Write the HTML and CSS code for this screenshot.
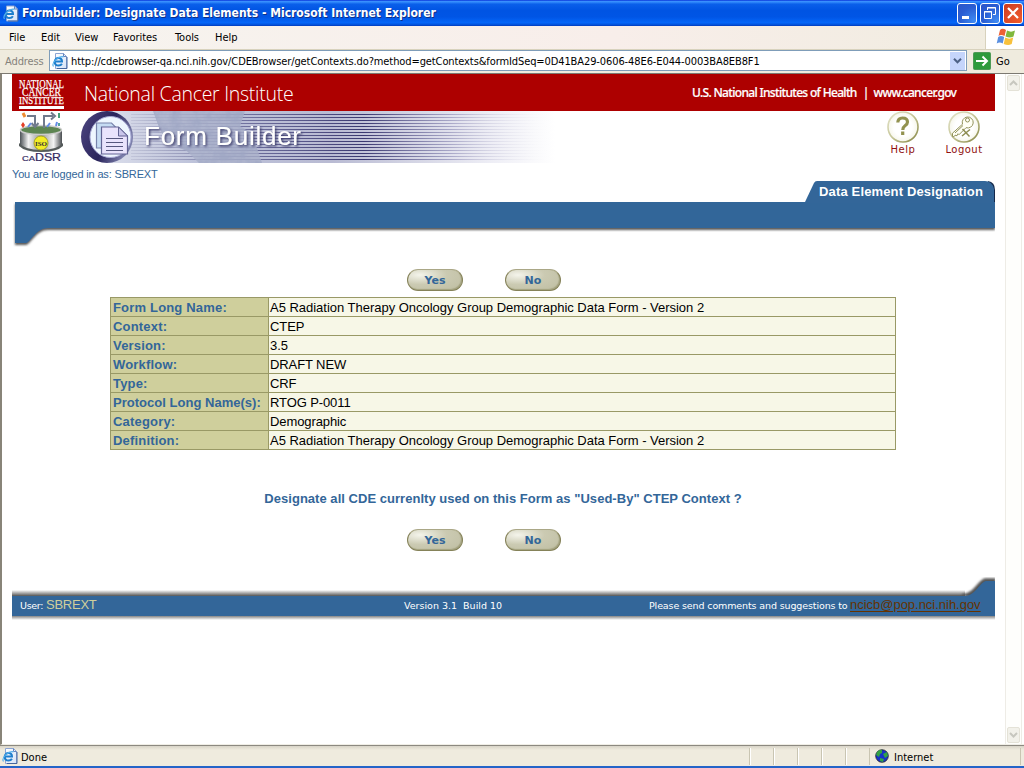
FILE: index.html
```html
<!DOCTYPE html>
<html lang="en">
<head>
<meta charset="utf-8">
<title>Formbuilder: Designate Data Elements</title>
<link rel="stylesheet" href="styles.css">
</head>
<body>
<svg class="defs" width="0" height="0" aria-hidden="true">
  <defs>
    <linearGradient id="paper" x1="0" y1="0" x2="1" y2="1"><stop offset="0" stop-color="#fff"/><stop offset="1" stop-color="#d5e2f7"/></linearGradient>
    <symbol id="ie" viewBox="0 0 16 16">
      <path d="M3.500.5h8l3 3v12h-11z" fill="url(#paper)" stroke="#8ca5d3"/>
      <path d="M11.500.5v3h3" fill="none" stroke="#6584bd"/><path d="M15 4v11.500H5" fill="none" stroke="#44659e"/>
      <path d="M3 8.500H10C10 6.200 8.500 5 6.500 5C4.300 5 2.700 6.700 2.700 8.800C2.700 11 4.300 12.600 6.500 12.600C8.200 12.600 9.300 11.900 9.900 10.800" fill="none" stroke="#1f7fcd" stroke-width="2"/>
      <path d="M1.500 13.500C-1 10 6.500 2.500 11.500 3.800" fill="none" stroke="#55b0ec" stroke-width="1.200"/>
    </symbol>
    <radialGradient id="rim"><stop offset=".6" stop-color="#fff"/><stop offset="1" stop-color="#f6f6ea"/></radialGradient>
    <linearGradient id="ring" x1="0" y1="0" x2="1" y2="1"><stop offset="0" stop-color="#e5e5cc"/><stop offset=".5" stop-color="#c3c394"/><stop offset="1" stop-color="#858544"/></linearGradient>
  </defs>
</svg>
<div class="window">
  <header class="titlebar">
    <svg class="ie-icon" width="16" height="17"><use href="#ie"/></svg>
    <span class="title">Formbuilder: Designate Data Elements - Microsoft Internet Explorer</span>
    <div class="controls">
      <span class="ctl"><svg width="18" height="18"><path d="M4 12h7v3H4z" fill="#fff"/></svg></span>
      <span class="ctl"><svg width="18" height="18" fill="none" stroke="#fff"><path d="M6.500 6V3.500h8v7H12M6 4h9M3.500 7.500h7v7h-7zM3 8h8"/></svg></span>
      <span class="ctl close"><svg width="18" height="18"><path d="M4 4l10 10M14 4L4 14" stroke="#fff" stroke-width="2.200"/></svg></span>
    </div>
  </header>
  <nav class="menubar">
    <span class="m-file">File</span><span class="m-edit">Edit</span><span class="m-view">View</span><span class="m-fav">Favorites</span><span class="m-tools">Tools</span><span>Help</span>
    <div class="flag"><svg width="20" height="18">
      <path d="M4 2c2-2 4-1 6 0L8.500 8c-2-1-4-1.500-6 0z" fill="#ed6135"/>
      <path d="M11 2.500c3 1.500 5 1.500 8 0L17.500 8.500c-3 1.500-5 1-8 0z" fill="#80b83c"/>
      <path d="M2.200 9c2-1.500 4-1 6 0l-1.500 6.500c-2-1.500-4-1.500-6 0z" fill="#5a8fe0"/>
      <path d="M9.200 9.500c3 1.500 5 1.500 8 0l-1.500 6.500c-3 1.500-5 1-8 0z" fill="#f8c13c"/>
    </svg></div>
  </nav>
  <div class="address">
    <span class="addr-label">Address</span>
    <div class="field">
      <svg width="16" height="16"><use href="#ie"/></svg>
      <span class="url">http://cdebrowser-qa.nci.nih.gov/CDEBrowser/getContexts.do?method=getContexts&amp;formIdSeq=0D41BA29-0606-48E6-E044-0003BA8EB8F1</span>
      <span class="drop"><svg width="9" height="6"><path d="M1 .8l3.500 3.500L8 .8" fill="none" stroke="#4d6185" stroke-width="2"/></svg></span>
    </div>
    <span class="go"><svg width="18" height="18"><rect x=".5" y=".5" width="17" height="17" rx="1" fill="#2e9a3c" stroke="#4d9a56"/><path d="M3 9h11M9.500 4.500L14 9l-4.500 4.500" fill="none" stroke="#fff" stroke-width="2"/></svg><span>Go</span></span>
  </div>
  <div class="viewport">
    <main class="page">
      <div class="nci">
        <svg class="nci-logo" width="46" height="31" fill="#fff" stroke="#fff" stroke-width=".25" font-family="Liberation Serif, serif">
          <text x="0" y="8.500" font-size="12" textLength="45" lengthAdjust="spacingAndGlyphs">NATIONAL</text>
          <text x="3" y="17" font-size="11.500" textLength="39" lengthAdjust="spacingAndGlyphs">CANCER</text>
          <text x="0" y="25" font-size="11" textLength="45" lengthAdjust="spacingAndGlyphs">INSTITUTE</text>
          <path d="M0 27h45v3H0z" stroke="none"/>
        </svg>
        <span class="nci-name">National Cancer Institute</span>
        <span class="nih">U.S. National Institutes of Health</span><span class="bar">|</span><span class="site">www.cancer.gov</span>
      </div>
      <div class="brand">
        <svg class="cadsr" width="52" height="52">
          <defs><linearGradient id="drum"><stop offset="0" stop-color="#4c5257"/><stop offset=".2" stop-color="#f2f2f2"/><stop offset=".5" stop-color="#91938e"/><stop offset=".8" stop-color="#f4f4f4"/><stop offset="1" stop-color="#494d50"/></linearGradient></defs>
          <path d="M5 20v14c5 7 37 7 42 0V20z" fill="url(#drum)"/>
          <path d="M4 32q6 7 22 7t22-7v3q-6 6-22 6T4 35z" fill="#555b5b"/>
          <ellipse cx="26" cy="19" rx="20.500" ry="4.500" fill="#5d8552" stroke="#ccc" stroke-width="1.500"/>
          <path d="M12 5h8v10M16.500 12l3.500 4 3.500-4M29 17V5h9M36 1.500l4 3.500-4 3.500" fill="none" stroke="#707a8c" stroke-width="2"/>
          <path d="M13 16l3-4M32 16l3-4M41 15l1-4" stroke="#648be8" stroke-width="2"/>
          <path d="M6 14l2-3 2 3-2 3z" fill="#e33f27"/><path d="M44 2v5" stroke="#46a07a" stroke-width="2"/><path d="M8 2l2 4" stroke="#ed8b31" stroke-width="3"/><path d="M44 12v3" stroke="#55a3a0" stroke-width="2"/>
          <circle cx="26" cy="32" r="7" fill="#f3ed24" stroke="#a5a425"/>
          <text x="20" y="34.500" font-family="Liberation Serif, serif" font-size="7" font-weight="bold" textLength="12" lengthAdjust="spacingAndGlyphs" fill="#333">ISO</text>
          <text x="7" y="50" font-family="Liberation Sans, sans-serif" font-size="8" fill="#33295f" stroke="#33295f" stroke-width=".2" textLength="13" lengthAdjust="spacingAndGlyphs">CA</text>
          <text x="20" y="50" font-family="Liberation Sans, sans-serif" font-size="10.500" fill="#33295f" stroke="#33295f" stroke-width=".2" textLength="26" lengthAdjust="spacingAndGlyphs">DSR</text>
        </svg>
        <div class="banner">
          <svg width="474" height="52">
            <defs>
              <linearGradient id="fade"><stop offset="0" stop-color="#d9dcea"/><stop offset=".2" stop-color="#bcc1d9"/><stop offset=".5" stop-color="#b9bbd3"/><stop offset=".65" stop-color="#cfd0e1"/><stop offset=".85" stop-color="#ededf5"/><stop offset="1" stop-color="#fff"/></linearGradient>
              <linearGradient id="rules"><stop offset="0" stop-color="#6a6c95" stop-opacity=".15"/><stop offset=".25" stop-color="#55558a" stop-opacity=".7"/><stop offset=".55" stop-color="#3a3870"/><stop offset=".75" stop-color="#8d8bb5" stop-opacity=".7"/><stop offset="1" stop-color="#fff" stop-opacity="0"/></linearGradient>
              <linearGradient id="orb" x1="0" y1="0" x2="1" y2=".4"><stop offset="0" stop-color="#b9b5da"/><stop offset=".15" stop-color="#453e78"/><stop offset=".6" stop-color="#29245b"/><stop offset="1" stop-color="#7d80ac"/></linearGradient>
              <filter id="shade" x="-10%" y="-30%" width="125%" height="170%"><feDropShadow dx="1.500" dy="1.500" stdDeviation=".8" flood-color="#3b3b6b"/></filter>
              <filter id="cloud" x="0" y="0" width="100%" height="100%"><feTurbulence type="fractalNoise" baseFrequency=".1" numOctaves="3" seed="4"/><feColorMatrix values="0 0 0 0 .34 0 0 0 0 .38 0 0 0 0 .55 2.400 0 0 0 -.8"/><feComposite in2="SourceAlpha" operator="in"/></filter>
            </defs>
            <path d="M28 0h446v52H28z" fill="url(#fade)"/>
            <path d="M50 3.500H473M50 6.500H473.010M50 9.500H473M50 12.500H473M50 15.500H473M50 18.500H473M50 21.500H473M50 24.500H473M50 27.500H473M50 30.500H473M50 33.500H473M50 36.500H473M50 39.500H473M50 42.500H473M50 45.500H473M50 48.500H473" stroke="url(#rules)"/>
            <path d="M72 0h70l4 12 8 10-6 14 10 16H118l-12-12-20-8-8-16zM140 0h24l-5 15 12 8 10 29h-40l8-28z" fill="#a9b0c9" opacity=".75"/>
            <path d="M72 0h70l4 12 8 10-6 14 10 16H118l-12-12-20-8-8-16zM140 0h24l-5 15 12 8 10 29h-40l8-28z" filter="url(#cloud)" opacity=".7"/>
            <circle cx="26" cy="26" r="26" fill="url(#orb)"/>
            <circle cx="29.500" cy="26" r="20.500" fill="#eef6ff" stroke="#a8aad5"/>
            <path d="M15.500 12h15l5 5v20h-20z" fill="#c6dcf3" stroke="#7883ac" stroke-width="1.200"/>
            <path d="M20.500 16h17l9 9v18h-26z" fill="#e9e3fc" stroke="#626393" stroke-width="1.200"/>
            <path d="M37.500 16v9h9z" fill="#c9c6ea" stroke="#626393"/>
            <path d="M25 27.500h17M25 31.500h17M25 35.500h17M25 39.500h17" stroke="#56577e" stroke-width="1.200"/>
            <text class="fb" x="63" y="34" textLength="157" lengthAdjust="spacing" filter="url(#shade)">Form Builder</text>
          </svg>
        </div>
        <div class="tool help"><svg width="32" height="32"><circle cx="16" cy="16" r="15" fill="url(#rim)" stroke="url(#ring)" stroke-width="1.600"/><path d="M10.800 11.500q.2-4.500 4.700-4.500 5 0 5 4 0 2-2.500 3.700-2.200 1.500-2.200 4.300M15.700 20.500v3.500" fill="none" stroke="#92924f" stroke-width="3.200"/></svg><span>Help</span></div>
        <div class="tool"><svg width="32" height="32"><circle cx="16" cy="16" r="15" fill="url(#rim)" stroke="url(#ring)" stroke-width="1.600"/><path d="M14.500 13.200a5.500 5.500 0 1 1 3.500 3.500l-7 7-1-1-1 2-2-.5-1 1.500H4.500v-3.500zM7 22l8-7.500" fill="#fffff5" stroke="#92925a"/><circle cx="19.500" cy="9" r="2" fill="none" stroke="#92925a"/><path d="M14.500 18l7 7.500M22 18.500l-8 6.500" stroke="#8d8d51" stroke-width="1.500"/></svg><span>Logout</span></div>
      </div>
      <div class="login">You are logged in as: SBREXT</div>
      <div class="tabbar">
        <svg width="983" height="68">
          <defs><filter id="soft" x="-5%" y="-20%" width="110%" height="150%"><feDropShadow dx="0" dy="2" stdDeviation="1.200" flood-color="#444" flood-opacity=".9"/></filter></defs>
          <path d="M976 0q7 1 7 9v12h-5z" fill="#14284a"/>
          <path d="M3 21h980v26H36C24 47 19 61 14 62H3z" fill="#336699" filter="url(#soft)"/>
          <path d="M793 21l9-19q1-2 3-2h168q7 0 9 8v14H793z" fill="#336699"/>
        </svg>
        <span class="tab">Data Element Designation</span>
      </div>
      <div class="buttons top"><button>Yes</button><button>No</button></div>
      <table class="details">
        <tr><th>Form Long Name:</th><td class="long">A5 Radiation Therapy Oncology Group Demographic Data Form - Version 2</td></tr>
        <tr><th>Context:</th><td class="caps">CTEP</td></tr>
        <tr><th>Version:</th><td class="caps">3.5</td></tr>
        <tr><th>Workflow:</th><td class="caps">DRAFT NEW</td></tr>
        <tr><th>Type:</th><td class="caps">CRF</td></tr>
        <tr><th class="proto">Protocol Long Name(s):</th><td class="caps">RTOG P-0011</td></tr>
        <tr><th>Category:</th><td>Demographic</td></tr>
        <tr><th>Definition:</th><td class="long">A5 Radiation Therapy Oncology Group Demographic Data Form - Version 2</td></tr>
      </table>
      <p class="question">Designate all CDE currenlty used on this Form as "Used-By" CTEP Context ?</p>
      <div class="buttons bottom"><button>Yes</button><button>No</button></div>
      <footer class="footer">
        <svg width="983" height="44">
          <defs><linearGradient id="above" x1="0" y1="0" x2="0" y2="1"><stop offset="0" stop-color="#fff"/><stop offset="1" stop-color="#555"/></linearGradient>
          <linearGradient id="below" x1="0" y1="0" x2="0" y2="1"><stop offset="0" stop-color="#666"/><stop offset="1" stop-color="#fff"/></linearGradient><filter id="blur"><feGaussianBlur stdDeviation="1.100"/></filter></defs>
          <path d="M0 14h953v6H0z" fill="url(#above)"/>
          <path d="M0 39h983v5H0z" fill="url(#below)"/>
          <path d="M950 19C964 17 966 5 973 3h10v10h-8l-12 9z" fill="#555" stroke="#555" stroke-width="1.500" filter="url(#blur)"/>
          <path d="M0 20h953c10 0 15-14 21-15h9v35H0z" fill="#336699"/>
        </svg>
        <div class="foot-text">
          <span class="user">User:</span><span class="name">SBREXT</span>
          <span class="ver">Version 3.1&nbsp; Build 10</span>
          <span class="send">Please send comments and suggestions to</span><a class="mail">ncicb@pop.nci.nih.gov</a>
        </div>
      </footer>
    </main>
    <aside class="scroll">
      <span class="sb"><svg width="9" height="6"><path d="M1 5l3.500-3.500L8 5" fill="none" stroke="#c7c7bf" stroke-width="2"/></svg></span>
      <span class="sb"><svg width="9" height="6"><path d="M1 1l3.500 3.500L8 1" fill="none" stroke="#c7c7bf" stroke-width="2"/></svg></span>
    </aside>
  </div>
  <div class="status">
    <svg width="16" height="16"><use href="#ie"/></svg><span class="done">Done</span>
    <i></i><i></i><i></i><i></i><i></i>
    <div class="zone"><svg width="14" height="14"><circle cx="7" cy="7" r="6.300" fill="#1833c9" stroke="#222" stroke-width=".8"/><path d="M2 3q3-3 5-2v3L5 5 4 8 1 6zM8 5l4-2 1 4-3 2zM5 9l4 1-1 3-3-1z" fill="#34a344"/></svg><span>Internet</span></div>
  </div>
</div>
</body>
</html>
```
FILE: styles.css
```css
* { box-sizing: border-box; }
body { margin: 0; font-family: "Liberation Sans", Arial, sans-serif; }
svg { display: block; flex: none; }
.defs { position: absolute; }
.window { width: 1024px; height: 768px; display: flex; flex-direction: column; overflow: hidden; white-space: nowrap; background: #efebde; }
.titlebar, .menubar, .address, .status { font-family: "DejaVu Sans Condensed", "DejaVu Sans", sans-serif; font-stretch: condensed; font-size: 11px; color: #000; display: flex; align-items: center; }
.titlebar { height: 26px; padding: 0 3px; background: linear-gradient(#0831d9 0, #3a93ff 6%, #0a5fea 16%, #0054e3 40%, #0055e5 65%, #0566f8 87%, #0355df 94%, #023bbd); }
.title { color: #fff; font-size: 12px; font-weight: bold; margin-left: 3px; letter-spacing: 0; text-shadow: 1px 1px #0f2f86; }
.controls { display: flex; gap: 3px; margin-left: auto; margin-right: -2px; }
.ctl { width: 20px; height: 21px; border: 1px solid #fff; border-radius: 3px; background: radial-gradient(circle at 90% 90%, #3f8bf3, #2a5dd2 60%, #2c55c8); }
.close { background: radial-gradient(circle at 90% 90%, #f05a2a, #dc4a29 60%, #c9391c); }
.menubar { height: 24px; padding-left: 9px; background: linear-gradient(90deg, #f6f4ef, #f8eeea 60%, #f0ecdf); border-bottom: 1px solid #d8d2bd; }
.menubar span { letter-spacing: -.05px; }
.m-file { width: 32px; } .m-edit { width: 34px; } .m-view { width: 38px; } .m-fav { width: 62px; } .m-tools { width: 40px; }
.flag { width: 39px; height: 23px; margin-left: auto; padding: 2px 0 0 10px; background: #fff; border-left: 1px solid #d8d2bd; }
.address { height: 24px; padding: 0 2px 2px 5px; border-bottom: 1px solid #7c7971; }
.addr-label { width: 44px; padding-top: 1px; color: #85827b; letter-spacing: -.1px; }
.field { display: flex; align-items: center; width: 918px; height: 21px; padding: 0 1px 0 2px; background: #fff; border: 1px solid #7f9db9; }
.url { margin-left: 3px; padding-top: 2px; letter-spacing: -.1px; }
.drop { display: grid; place-items: center; width: 15px; height: 18px; margin-left: auto; background: #c5d5fb; }
.go { display: flex; align-items: center; gap: 5px; margin-left: 6px; }
.go span { padding-top: 1px; }
.viewport { flex: 1; display: flex; background: #fff; border-left: 2px solid #888478; border-bottom: 1px solid #f0eee6; min-height: 0; }
.page { width: 1003px; padding-left: 10px; }
.scroll { width: 17px; display: flex; flex-direction: column; justify-content: space-between; background: #fefefc; border-left: 1px solid #eeece6; border-right: 1px solid #eeece6; }
.sb { display: grid; place-items: center; height: 16px; margin: 1px; background: #f2f1ea; border: 1px solid #e4e2d7; border-radius: 2px; }
.nci { display: flex; align-items: center; width: 983px; height: 37px; background: #ad0000; color: #fff; font-family: "Noto Sans", sans-serif; }
.nci-logo { margin: 3px 0 0 7px; overflow: visible; }
.nci-name { width: 608px; margin-left: 19px; padding-top: 2px; font-family: "Open Sans", sans-serif; font-size: 19.500px; font-weight: 300; letter-spacing: -.28px; }
.nih, .site, .bar { font-size: 12px; font-weight: 500; letter-spacing: -.68px; -webkit-text-stroke: .2px #fff; }
.bar { margin: 0 5px 0 6px; }
.brand { display: flex; height: 52px; width: 983px; }
.cadsr { margin-left: 3px; }
.banner { width: 474px; margin-left: 14px; }
.fb { font-family: "Liberation Sans", sans-serif; font-size: 26px; fill: #fff; }
.tool { display: flex; flex-direction: column; align-items: center; width: 40px; color: #901010; font: 10px/13px "DejaVu Sans", sans-serif; letter-spacing: .5px; }
.help { margin-left: 328px; margin-right: 21px; }
.login { height: 18px; font-size: 11px; line-height: 22px; color: #336699; letter-spacing: -.16px; }
.tabbar { display: grid; height: 88px; width: 983px; }
.tabbar > *, .footer > * { grid-area: 1 / 1; }
.tab { justify-self: end; margin-right: 12px; height: 21px; line-height: 21px; color: #fff; font-size: 13px; font-weight: bold; letter-spacing: .15px; }
.buttons { display: flex; gap: 42px; padding-left: 395px; height: 22px; }
button { width: 56px; height: 22px; padding: 0; border: 1px solid #858259; border-top-color: #aaa786; border-radius: 11px; background: radial-gradient(ellipse at 22% 25%, #f4f4eb, #cbcab2 45%, #bebda1); box-shadow: inset -1px -1px 1px #a3a27f; color: #336699; font: bold 11px "DejaVu Sans", sans-serif; }
.details { margin: 6px 0 0 98px; width: 786px; table-layout: fixed; border-collapse: collapse; font-size: 13px; line-height: 16px; color: #000; }
.details tr { height: 19px; }
.details th, .details td { border: 1px solid #999966; padding: 2px 1px 0; height: 19px; text-align: left; }
.details th { width: 158px; padding-left: 2px; background: #cfcf9c; color: #336699; letter-spacing: .18px; }
.details .proto { letter-spacing: .02px; }
.details td { background: #f7f7e7; letter-spacing: -.1px; }
.details .long { letter-spacing: -.02px; }
.question { width: 982px; margin: 39px 0 0; height: 40px; text-align: center; font-size: 13px; line-height: 20px; font-weight: bold; color: #336699; letter-spacing: .03px; }
.footer { display: grid; width: 983px; margin-top: 25px; }
.foot-text { display: flex; align-items: baseline; height: 18px; margin-top: 20px; padding-left: 8px; color: #fff; font: 10px/20px "DejaVu Sans", sans-serif; }
.user { width: 26px; font-size: 9.500px; letter-spacing: -.3px; }
.name { width: 358px; color: #cfcf9c; font: 13px "Liberation Sans", sans-serif; letter-spacing: -.25px; }
.ver { width: 245px; font-size: 9.500px; }
.send { width: 201px; font-size: 9.500px; letter-spacing: -.12px; }
.mail { font: 13px "Liberation Sans", sans-serif; color: #663300; text-decoration: underline; text-underline-offset: 2px; letter-spacing: -.02px; }
.status { height: 23px; padding: 1px 2px 1px; border-top: 1px solid #8c8980; border-bottom: 2px solid #2464c8; background: linear-gradient(#d8d4c8, #efebde 20%); }
.done { width: 728px; margin-left: 3px; padding-top: 2px; }
.status i { width: 24px; height: 17px; border-left: 1px solid #c9c5b2; box-shadow: inset 1px 0 #fff; }
.zone { display: flex; align-items: center; gap: 5px; width: 152px; height: 17px; padding-left: 5px; border-left: 1px solid #c9c5b2; border-right: 1px solid #c9c5b2; }
.zone span { padding-top: 2px; }
```
